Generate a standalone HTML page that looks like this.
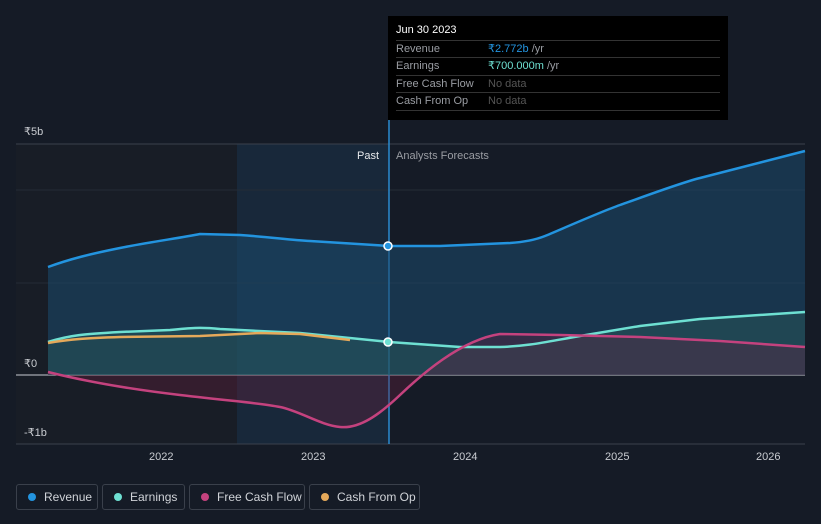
<!DOCTYPE html><html><head><style>
body{margin:0;background:#151b26;width:821px;height:524px;overflow:hidden;font-family:"Liberation Sans",sans-serif;position:relative}
.t{position:absolute;font-size:11px;color:#c9ccd1}
.leg{position:absolute;top:484px;height:26px;border:1px solid #3a404b;border-radius:3px;box-sizing:border-box;font-size:12px;color:#d0d3d8;line-height:24px;padding-left:27px;white-space:nowrap}
.leg i{position:absolute;left:11px;top:8px;width:8px;height:8px;border-radius:50%}
.tip{position:absolute;left:388px;top:16px;width:340px;height:104px;background:#000}
.row{position:absolute;left:8px;width:324px;border-top:1px solid #333;font-size:11px;color:#9a9da3;height:17px;line-height:17px}
.row b{font-weight:normal;position:absolute;left:92px}
</style></head><body>
<svg width="821" height="524" style="position:absolute;left:0;top:0">
<rect x="16" y="144" width="221" height="300" fill="#181d26"/>
<rect x="237" y="144" width="152" height="300" fill="#18283a"/>
<line x1="16" y1="144" x2="805" y2="144" stroke="#3a414c"/>
<line x1="16" y1="190" x2="805" y2="190" stroke="#252c37"/>
<line x1="16" y1="283" x2="805" y2="283" stroke="#252c37"/>
<line x1="16" y1="375" x2="805" y2="375" stroke="#c9ccd1"/>
<line x1="16" y1="444" x2="805" y2="444" stroke="#3a414c"/>
<line x1="389" y1="95" x2="389" y2="444" stroke="#2a8bd0" stroke-width="1.5"/>
<path d="M48,267 C70,259 90,254 120,248 S180,238 200,234 L240,235 C270,237 290,240 310,241 L389,246 L440,246 L510,243 C525,242 535,240 545,236 S600,212 620,205 S680,183 700,178 L805,151 L805,375 L48,375Z" fill="#1c4a6e" fill-opacity=".55"/>
<path d="M48,342 C70,335 85,334 120,332 L170,330 C190,328 200,327 220,329 L300,333 L389,342 L460,347 L500,347 C530,346 545,342 580,336 L640,326 L700,319 L805,312 L805,375 L48,375Z" fill="#2a5a5a" fill-opacity=".45"/>
<path d="M48,372 C80,380 120,388 180,395 S260,403 280,407 S320,425 340,427 S380,414 400,395 S460,340 500,334 L560,335 L640,337 L720,341 L805,347 L805,375 L48,375Z" fill="#6a2040" fill-opacity=".35"/>
<path d="M48,267 C70,259 90,254 120,248 S180,238 200,234 L240,235 C270,237 290,240 310,241 L389,246 L440,246 L510,243 C525,242 535,240 545,236 S600,212 620,205 S680,183 700,178 L805,151" fill="none" stroke="#2394df" stroke-width="2.5"/>
<path d="M48,342 C70,335 85,334 120,332 L170,330 C190,328 200,327 220,329 L300,333 L389,342 L460,347 L500,347 C530,346 545,342 580,336 L640,326 L700,319 L805,312" fill="none" stroke="#6ee0d2" stroke-width="2.5"/>
<path d="M48,372 C80,380 120,388 180,395 S260,403 280,407 S320,425 340,427 S380,414 400,395 S460,340 500,334 L560,335 L640,337 L720,341 L805,347" fill="none" stroke="#c4427e" stroke-width="2.5"/>
<path d="M48,343 C70,339 90,338 120,337 L200,336 L260,333 L300,334 L350,340" fill="none" stroke="#e5a95a" stroke-width="2.5"/>
<circle cx="388" cy="246" r="4" fill="#2394df" stroke="#fff" stroke-width="1.5"/>
<circle cx="388" cy="342" r="4" fill="#6ee0d2" stroke="#fff" stroke-width="1.5"/>
</svg>
<div class="t" style="left:24px;top:125px">₹5b</div>
<div class="t" style="left:24px;top:357px">₹0</div>
<div class="t" style="left:24px;top:426px">-₹1b</div>
<div class="t" style="left:357px;top:150px;color:#e6e8eb">Past</div>
<div class="t" style="left:396px;top:150px;color:#9a9da3">Analysts Forecasts</div>
<div class="t" style="left:149px;top:451px">2022</div>
<div class="t" style="left:301px;top:451px">2023</div>
<div class="t" style="left:453px;top:451px">2024</div>
<div class="t" style="left:605px;top:451px">2025</div>
<div class="t" style="left:756px;top:451px">2026</div>
<div class="tip">
<div style="position:absolute;left:8px;top:8px;font-size:11px;color:#fff">Jun 30 2023</div>
<div class="row" style="top:24px">Revenue<b style="color:#2394df">₹2.772b <span style="color:#9a9da3">/yr</span></b></div>
<div class="row" style="top:41px">Earnings<b style="color:#6ee0d2">₹700.000m <span style="color:#9a9da3">/yr</span></b></div>
<div class="row" style="top:59px">Free Cash Flow<b style="color:#555">No data</b></div>
<div class="row" style="top:76px;border-bottom:1px solid #333">Cash From Op<b style="color:#555">No data</b></div>
</div>
<div class="leg" style="left:16px;width:82px"><i style="background:#2394df"></i>Revenue</div>
<div class="leg" style="left:102px;width:83px"><i style="background:#6ee0d2"></i>Earnings</div>
<div class="leg" style="left:189px;width:116px"><i style="background:#c4427e"></i>Free Cash Flow</div>
<div class="leg" style="left:309px;width:111px"><i style="background:#e5a95a"></i>Cash From Op</div>
</body></html>
